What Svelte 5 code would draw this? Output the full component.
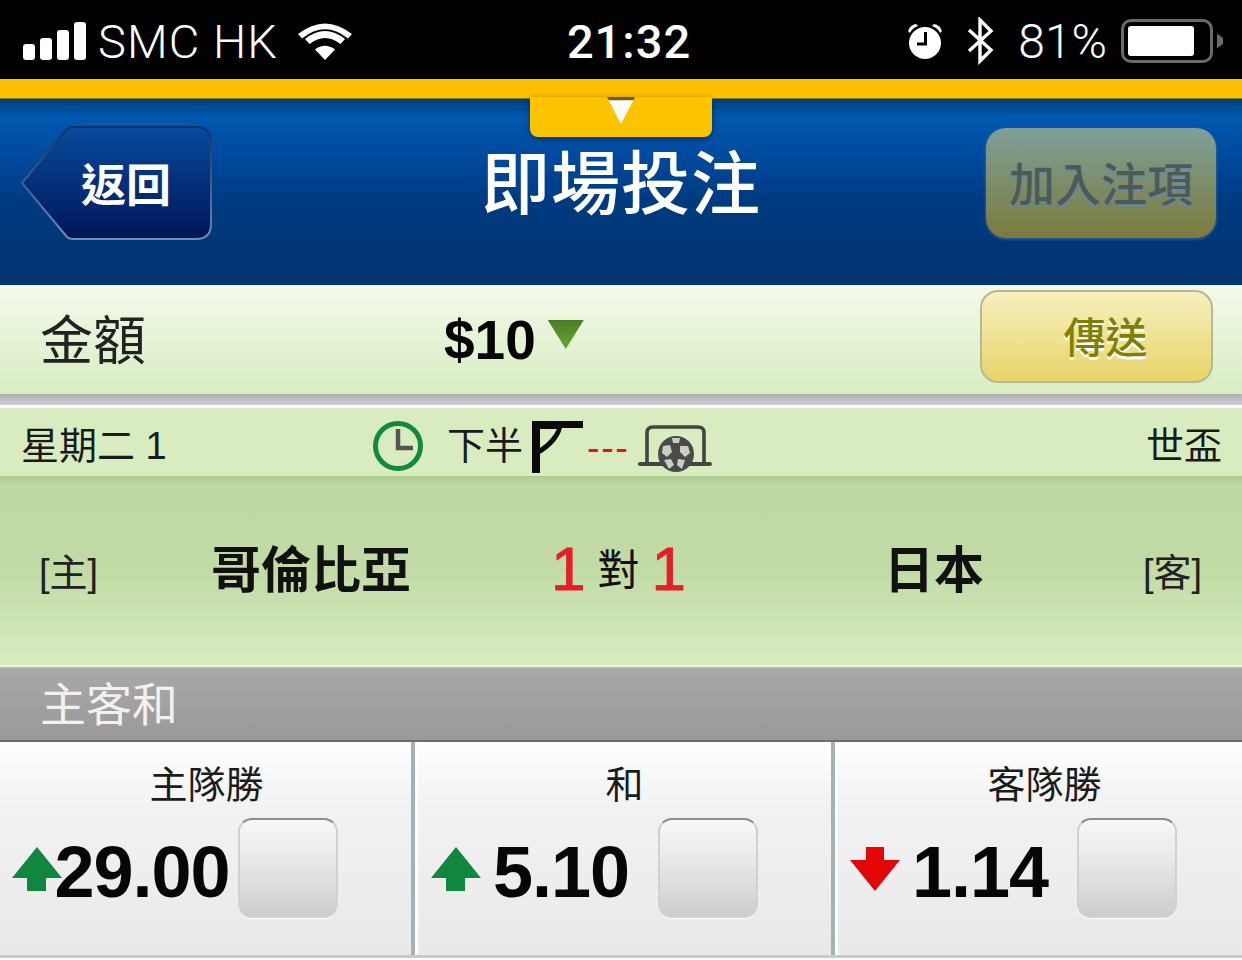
<script>
  const odds = [
    { label: '主隊勝', value: '29.00', dir: 'up' },
    { label: '和', value: '5.10', dir: 'up' },
    { label: '客隊勝', value: '1.14', dir: 'down' }
  ];

  // light panels on the football, around the dark centre
  const patches = [
    '25,22 32,21 34,28 29,33 24,29',
    '42,22 50,22 52,29 47,33 42,28',
    '34,14 42,14 41,19 35,19',
    '26,36 33,35 36,41 31,45',
    '40,35 47,36 44,45 39,41'
  ];
</script>

<div class="screen">
  <div class="status">
    <div class="status-left">
      <div class="signal"><i></i><i></i><i></i><i></i></div>
      <span class="carrier">SMC HK</span>
      <svg class="wifi" viewBox="0 0 54 40" width="54" height="40">
        <path d="M27 39 L17 28.5 Q27 21 37 28.5 Z" fill="#fff" />
        <path d="M11.5 23 L7 18 Q27 2 47 18 L42.5 23 Q27 11 11.5 23 Z" fill="#fff" />
        <path d="M4 15.5 L0 11 Q27 -10 54 11 L50 15.5 Q27 -3 4 15.5 Z" fill="#fff" transform="translate(0 2)" />
      </svg>
    </div>
    <div class="clock">21:32</div>
    <div class="status-right">
      <svg class="alarm" viewBox="0 0 38 38" width="38" height="38">
        <circle cx="19" cy="21" r="16" fill="#fff" />
        <path d="M2 9 Q4 3 10 2 L12 4 Q6 6 4 11 Z M36 9 Q34 3 28 2 L26 4 Q32 6 34 11 Z" fill="#fff" />
        <path d="M19.5 10 V22 H11" fill="none" stroke="#000" stroke-width="3" />
      </svg>
      <svg class="bt" viewBox="0 0 30 48" width="30" height="48">
        <path d="M3 13 L25 33 L14 44 V3 L25 14 L3 34" fill="none" stroke="#fff" stroke-width="3.4" />
      </svg>
      <span class="pct">81%</span>
      <div class="battery"><div class="fill"></div></div>
      <div class="nub"></div>
    </div>
  </div>

  <div class="strip"></div>

  <div class="header">
    <div class="tab"><span class="tab-arrow"></span></div>
    <svg class="back-shape" viewBox="0 0 194 116" width="194" height="116">
      <defs>
        <linearGradient id="backfill" x1="0" y1="0" x2="0" y2="1">
          <stop offset="0" stop-color="#064a9c" />
          <stop offset="1" stop-color="#021558" />
        </linearGradient>
        <linearGradient id="backline" x1="0" y1="0" x2="0" y2="1">
          <stop offset="0" stop-color="#14305f" />
          <stop offset="1" stop-color="#6f8db8" />
        </linearGradient>
      </defs>
      <path d="M2 58 L47 4 Q49 2 53 2 H176 Q191 2 191 17 V99 Q191 114 176 114 H53 Q49 114 47 112 Z" fill="url(#backfill)" stroke="url(#backline)" stroke-width="2" />
    </svg>
    <button class="back">返回</button>
    <h1>即場投注</h1>
    <button class="add">加入注項</button>
  </div>

  <div class="amount">
    <span class="amount-label">金額</span>
    <div class="amount-value">
      <b>$10</b>
      <span class="amount-arrow"></span>
    </div>
    <button class="send">傳送</button>
  </div>
  <div class="gap"></div>

  <div class="info">
    <span class="date">星期二 1</span>
    <div class="live">
      <svg class="time-icon" viewBox="0 0 50 50" width="50" height="50">
        <circle cx="25" cy="25" r="22.5" fill="none" stroke="#118a3e" stroke-width="5" />
        <path d="M25 8 V27 H40" fill="none" stroke="#555" stroke-width="4.5" />
      </svg>
      <span class="half">下半</span>
      <svg class="corner" viewBox="0 0 52 52" width="52" height="52">
        <path fill-rule="evenodd" d="M0 0 H51 V7 H30 Q26 22 8 33 V52 H0 Z M8 8 H25 Q20 19 8 27 Z" fill="#0a0a0a" />
      </svg>
      <span class="dash">---</span>
      <svg class="goal" viewBox="0 0 74 50" width="74" height="50">
        <path d="M9 38 V9 Q9 3 15 3 H60 Q66 3 66 9 V38" fill="none" stroke="#444" stroke-width="3.6" />
        <path d="M2 40 H72" stroke="#444" stroke-width="4" stroke-linecap="round" />
        <circle cx="38" cy="30" r="18" fill="#4a4a4a" />
        {#each patches as p}
          <polygon points={p} fill="#c6d0ba" />
        {/each}
      </svg>
    </div>
    <span class="league">世盃</span>
  </div>

  <div class="match">
    <span class="tag home-tag">[主]</span>
    <span class="team">哥倫比亞</span>
    <div class="score"><em>1</em><span>對</span><em>1</em></div>
    <span class="team">日本</span>
    <span class="tag away-tag">[客]</span>
  </div>

  <div class="section">主客和</div>

  <div class="odds">
    {#each odds as o}
      <div class="cell">
        <div class="cell-label">{o.label}</div>
        <div class="cell-row">
          <svg class="trend" viewBox="0 0 50 44" width="50" height="44">
            {#if o.dir === 'up'}
              <path d="M25 0 L50 31 H34 V44 H15 V31 H0 Z" fill="#11863e" />
            {:else}
              <path d="M25 44 L50 13 H34 V0 H16 V13 H0 Z" fill="#e30609" />
            {/if}
          </svg>
          <span class="price">{o.value}</span>
          <div class="check"></div>
        </div>
      </div>
    {/each}
  </div>
</div>

<style>
  :global(body) {
    margin: 0;
    background: #fff;
  }

  .screen {
    width: 1242px;
    height: 960px;
    overflow: hidden;
    font-family: "Liberation Sans", "Noto Sans CJK TC", sans-serif;
  }

  .status {
    height: 79px;
    background: #000;
    color: #fff;
    display: grid;
    grid-template-columns: 1fr 1fr 1fr;
    align-items: center;
    font-family: "Roboto", sans-serif;
    font-weight: 300;
    font-size: 47px;
    padding-top: 3px;
    box-sizing: border-box;
  }

  .status-left {
    display: flex;
    align-items: center;
    padding-left: 23px;
  }

  .signal {
    display: flex;
    align-items: flex-end;
    gap: 5px;
    height: 38px;
  }

  .signal i {
    width: 12px;
    border-radius: 3px;
    background: #fff;
  }

  .signal i:nth-child(1) { height: 16px; }
  .signal i:nth-child(2) { height: 22px; }
  .signal i:nth-child(3) { height: 30px; }
  .signal i:nth-child(4) { height: 38px; }

  .carrier {
    margin-left: 12px;
    letter-spacing: 1.1px;
  }

  .wifi {
    margin-left: 20px;
  }

  .clock {
    text-align: center;
    font-weight: 500;
    font-size: 47px;
    letter-spacing: 1px;
    margin-left: 16px;
  }

  .status-right {
    display: flex;
    align-items: center;
    justify-content: flex-end;
    padding-right: 19px;
  }

  .bt {
    margin-left: 22px;
  }

  .pct {
    margin-left: 22px;
    font-size: 48px;
  }

  .battery {
    margin-left: 14px;
    width: 92px;
    height: 44px;
    border: 3px solid #6a6a6a;
    border-radius: 10px;
    padding: 4px;
    box-sizing: border-box;
  }

  .fill {
    width: 66px;
    height: 100%;
    background: #fff;
    border-radius: 3px;
  }

  .nub {
    width: 6px;
    height: 15px;
    margin-left: 4px;
    background: #6a6a6a;
    clip-path: polygon(0 0, 100% 30%, 100% 70%, 0 100%);
  }

  .strip {
    height: 20px;
    background: #fcc000;
    border-bottom: 1px solid #8a7a1a;
    box-sizing: border-box;
  }

  .header {
    position: relative;
    height: 186px;
    padding-bottom: 17px;
    box-sizing: border-box;
    background: linear-gradient(#01407f 0, #0058b0 10%, #00479a 35%, #003a80 55%, #02346f 100%);
    display: grid;
    grid-template-columns: 1fr 1fr 1fr;
    align-items: center;
    text-align: center;
  }

  .tab {
    position: absolute;
    left: 530px;
    top: -2px;
    width: 182px;
    height: 40px;
    background: #fcc300;
    border-radius: 0 0 8px 8px;
    box-shadow: 0 2px 6px rgba(0, 0, 0, 0.4);
  }

  .tab-arrow {
    position: absolute;
    left: 77px;
    top: 0;
    width: 28px;
    height: 27px;
    background: linear-gradient(#7a5c00 0, #7a5c00 10%, #fff 14%);
    clip-path: polygon(0 0, 100% 0, 50% 100%);
  }

  .back-shape {
    position: absolute;
    left: 20px;
    top: 26px;
  }

  .back {
    position: relative;
    justify-self: start;
    margin-left: 81px;
    padding: 0;
    border: 0;
    background: none;
    color: #fff;
    font: 700 45px "Noto Sans CJK TC", sans-serif;
    line-height: 1;
    margin-top: -3px;
  }

  h1 {
    margin: 4px 0 0;
    color: #fff;
    font-size: 69px;
    font-weight: 500;
    letter-spacing: 1px;
    line-height: 1;
  }

  .add {
    justify-self: end;
    margin-right: 26px;
    width: 230px;
    height: 110px;
    margin-top: -2px;
    border: 0;
    border-radius: 20px;
    background: linear-gradient(#7e9f99, #7b7b3c);
    box-shadow: 0 1px 2px 1px rgba(90, 130, 180, 0.4);
    color: #4e5a58;
    font: 500 46px "Noto Sans CJK TC", sans-serif;
    text-shadow: 0 2px 1px rgba(90, 140, 190, 0.8);
    padding: 0 0 4px;
  }

  .amount {
    height: 109px;
    background: linear-gradient(#f3f9ea, #d8edc2);
    display: grid;
    grid-template-columns: 444px 1fr auto;
    align-items: center;
    padding-left: 40px;
    padding-right: 29px;
    box-sizing: border-box;
  }

  .amount-label {
    font-size: 53px;
    color: #222;
    line-height: 1;
    margin-top: 4px;
  }

  .amount-value {
    display: flex;
    margin-left: -40px;
    align-items: flex-start;
  }

  .amount-value b {
    font: 700 55px "Liberation Sans", sans-serif;
    color: #050505;
    line-height: 1;
    margin-top: 2px;
  }

  .amount-arrow {
    width: 36px;
    height: 29px;
    margin-left: 12px;
    margin-top: 9px;
    background: linear-gradient(#4a7c28, #62aa36);
    clip-path: polygon(0 0, 100% 0, 50% 100%);
  }

  .send {
    width: 233px;
    height: 93px;
    margin-top: -7px;
    padding: 0 0 4px 18px;
    border: 2px solid #b5b994;
    border-radius: 18px;
    background: linear-gradient(#f7efbf, #e8d468);
    color: #808000;
    font: 500 42px "Noto Sans CJK TC", sans-serif;
    text-shadow: 0 3px 0 #fff;
  }

  .gap {
    height: 14px;
    background: linear-gradient(#b0b0b3 0, #cfcfd1 78%, #fff 79%);
  }

  .info {
    height: 68px;
    background: #d8ecc0;
    display: flex;
    align-items: center;
    justify-content: space-between;
    padding: 0 20px 0 21px;
    font-size: 38px;
    color: #1a1a1a;
    box-sizing: border-box;
    position: relative;
  }

  .date,
  .league {
    margin-top: 1px;
  }

  .live {
    position: absolute;
    left: 373px;
    top: 9px;
    display: flex;
    align-items: flex-start;
  }

  .time-icon {
    margin-top: 4px;
  }

  .half {
    margin-left: 24px;
    line-height: 1;
    margin-top: 10px;
  }

  .corner {
    margin-left: 9px;
    margin-top: 4px;
  }

  .dash {
    margin-left: 3px;
    color: #f01010;
    font-size: 38px;
    letter-spacing: 1.5px;
    margin-top: 12px;
    line-height: 1;
  }

  .goal {
    margin-left: 9px;
    margin-top: 7px;
  }

  .match {
    height: 189px;
    background: linear-gradient(#aecb92 0, #bfd9a2 6%, #c2dba6 50%, #d8ecc0 100%);
    border-bottom: 2px solid #eef5e4;
    box-sizing: content-box;
    display: grid;
    grid-template-columns: 171px 280px 335px 296px 1fr;
    align-items: center;
  }

  .tag {
    font-size: 38px;
    color: #222;
    margin-top: -2px;
  }

  .home-tag {
    padding-left: 39px;
  }

  .away-tag {
    text-align: right;
    padding-right: 40px;
  }

  .team {
    font-size: 50px;
    font-weight: 700;
    text-align: center;
    color: #111;
    margin-top: -10px;
  }

  .score {
    display: flex;
    align-items: center;
    justify-content: center;
    gap: 12px;
    font-size: 42px;
    margin-top: -9px;
    color: #111;
  }

  .score em {
    font: 400 62px "Liberation Sans", sans-serif;
    color: #e3202a;
    -webkit-text-stroke: 0.9px #e3202a;
    margin-top: 5px;
  }

  .section {
    height: 75px;
    background: linear-gradient(#bbb 0, #a9a7a7 4%, #9a9898 100%);
    border-bottom: 2px solid #6e6e6e;
    box-sizing: border-box;
    color: #f1f1f1;
    font-size: 46px;
    line-height: 76px;
    padding-left: 40px;
  }

  .odds {
    display: grid;
    grid-template-columns: 415px 420px 1fr;
    height: 213px;
    border-bottom: 3px solid #c9c9c9;
    box-sizing: content-box;
  }

  .cell {
    background: linear-gradient(#fefefe, #f2f2f2 30%, #e9e9e9);
    border-right: 4px solid #a3b1b8;
    box-sizing: border-box;
  }

  .cell + .cell {
    border-left: 3px solid #fff;
  }

  .cell:last-child {
    border-right: 0;
  }

  .cell-label {
    width: 413px;
    text-align: center;
    font-size: 38px;
    color: #1b1b1b;
    line-height: 1;
    padding-top: 24px;
  }

  .cell-row {
    display: flex;
    align-items: center;
    padding-top: 14px;
    padding-left: 12px;
  }

  .cell + .cell .cell-row {
    padding-left: 13px;
  }

  .cell:last-child .cell-row {
    padding-left: 12px;
  }

  .trend {
    flex: none;
    margin-top: 2px;
  }

  .price {
    flex: none;
    width: 160px;
    display: flex;
    justify-content: center;
    white-space: nowrap;
    font: 700 72px "Liberation Sans", sans-serif;
    line-height: 1;
    color: #060606;
    letter-spacing: -1px;
    margin-top: 7px;
  }

  .check {
    flex: none;
    margin-left: 16px;
    width: 100px;
    height: 100px;
    box-sizing: border-box;
    border: 2px solid #d0d0d2;
    border-top-color: #8d8d8f;
    border-radius: 14px;
    background: linear-gradient(#f8f8f9, #e9e9eb 40%, #cdcdd0);
    box-shadow: 0 1px 1px #fff;
  }

  .cell + .cell .check {
    margin-left: 17px;
  }
</style>
